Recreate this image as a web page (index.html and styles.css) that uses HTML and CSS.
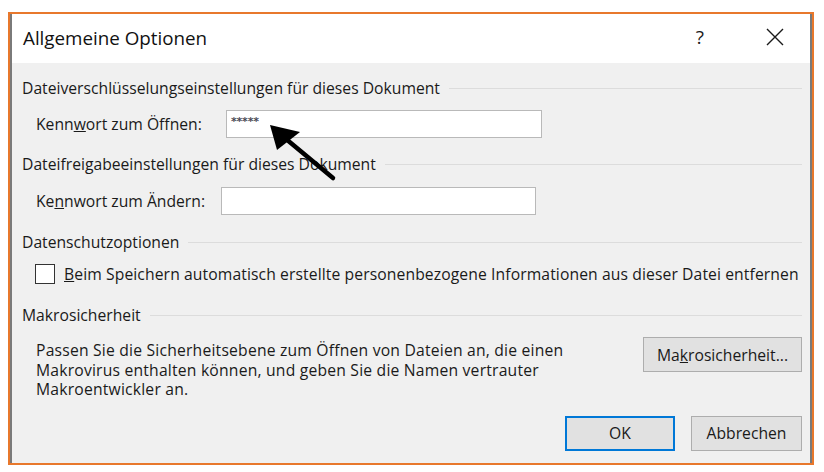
FILE: index.html
```html
<!DOCTYPE html>
<html lang="de">
<head>
  <meta charset="utf-8">
  <title>Allgemeine Optionen</title>
  <link rel="stylesheet" href="styles.css">
</head>
<body>
  <div class="frame">
    <div class="window">
      <div class="titlebar">
        <span class="title">Allgemeine Optionen</span>
        <span class="help">?</span>
        <svg class="close" width="18" height="18" viewBox="0 0 18 18">
          <path d="M1 1 L17 17 M17 1 L1 17" stroke="#1a1a1a" stroke-width="1.4" fill="none"/>
        </svg>
      </div>
      <div class="content">
        <div class="group-title">Dateiverschlüsselungseinstellungen für dieses Dokument</div>
        <div class="field first">
          <label class="label lbl-open">Kenn<u>w</u>ort zum Öffnen:</label>
          <div class="input input-open"><span class="stars">*****</span></div>
        </div>

        <div class="group-title g2">Dateifreigabeeinstellungen für dieses Dokument</div>
        <div class="field second">
          <label class="label lbl-change">Ke<u>n</u>nwort zum Ändern:</label>
          <div class="input input-change"></div>
        </div>

        <div class="group-title g3">Datenschutzoptionen</div>
        <div class="check-row">
          <span class="checkbox"></span>
          <span><u>B</u>eim Speichern automatisch erstellte personenbezogene Informationen aus dieser Datei entfernen</span>
        </div>

        <div class="group-title g4">Makrosicherheit</div>
        <div class="macro-row">
          <p class="macro-text">Passen Sie die Sicherheitsebene zum Öffnen von Dateien an, die einen Makrovirus enthalten können, und geben Sie die Namen vertrauter Makroentwickler an.</p>
          <button class="btn macro-btn">Ma<u>k</u>rosicherheit...</button>
        </div>

        <div class="footer">
          <button class="btn ok">OK</button>
          <button class="btn">Abbrechen</button>
        </div>
      </div>
    </div>
    <svg class="arrow" width="80" height="70" viewBox="0 0 80 70">
      <path d="M12 13 L65 57" stroke="#000" stroke-width="4.5" stroke-linecap="round"/>
      <path d="M2 4 L32 11 L9 29 Z" fill="#000"/>
    </svg>
  </div>
</body>
</html>
```

FILE: styles.css
```css
* {
  margin: 0;
  padding: 0;
  box-sizing: border-box;
}
body {
  width: 824px;
  height: 472px;
  background-color: #ffffff;
  font-family: 'Open Sans', 'Noto Sans', sans-serif;
  font-size: 15.7px;
  color: #1a1a1a;
  overflow: hidden;
}
.frame {
  position: relative;
  margin: 12px 0 0 8px;
  width: 806px;
  height: 453px;
  border: 2px solid #e8782c;
}
.window {
  height: 100%;
  border-left: 2px solid #7a7a7a;
  border-right: 2px solid #7a7a7a;
  display: flex;
  flex-direction: column;
}
.titlebar {
  height: 49px;
  background-color: #ffffff;
  display: flex;
  align-items: center;
  padding-left: 11px;
}
.title {
  font-size: 18.8px;
  color: #111;
  flex: 1;
  margin-top: -2px;
}
.help {
  font-size: 19px;
  margin-right: 62px;
  margin-top: -4px;
}
.close {
  margin-right: 26px;
  margin-top: -4px;
}
.content {
  flex: 1;
  background-color: #f0f0f0;
  padding: 15px 8px 0 10px;
}
.group-title {
  display: flex;
  align-items: center;
  height: 20px;
  white-space: nowrap;
}
.group-title::after {
  content: '';
  flex: 1;
  height: 1px;
  margin-left: 9px;
  background-color: #dcdcdc;
}
.g2 { margin-top: 16px; }
.g3 { margin-top: 17px; }
.g4 { margin-top: 21px; }
.field {
  display: flex;
  align-items: center;
  margin-top: 12px;
  padding-left: 14px;
}
.field.second { margin-top: 13px; }
.lbl-open { width: 190px; }
.lbl-change { width: 185px; }
.input {
  height: 28px;
  background-color: #ffffff;
  border: 1px solid #b9b9b9;
}
.input-open { width: 316px; padding: 5px 0 0 4px; line-height: 12px; }
.input-change { width: 315px; }
.stars {
  font-family: 'DejaVu Sans', sans-serif;
  font-size: 11px;
  font-weight: bold;
  color: #4a4a55;
  letter-spacing: -0.2px;
  vertical-align: top;
}
.check-row {
  display: flex;
  align-items: center;
  margin-top: 12px;
  padding-left: 13px;
  height: 20px;
  white-space: nowrap;
  letter-spacing: 0.1px;
}
.checkbox {
  width: 20px;
  height: 20px;
  background-color: #ffffff;
  border: 1px solid #333;
  margin-right: 9px;
  flex-shrink: 0;
}
.macro-row {
  display: flex;
  justify-content: space-between;
  align-items: flex-start;
  margin-top: 12px;
  padding-left: 14px;
}
.macro-text {
  width: 570px;
  line-height: 19.5px;
  padding-top: 4px;
  letter-spacing: 0.2px;
}
.btn {
  font-family: inherit;
  font-size: 15.7px;
  color: #1a1a1a;
  background-color: #e1e1e1;
  border: 1px solid #adadad;
  height: 35px;
  width: 111px;
}
.macro-btn {
  width: 159px;
}
.footer {
  display: flex;
  justify-content: flex-end;
  gap: 16px;
  margin-top: 16px;
}
.btn.ok {
  width: 110px;
  border: 2px solid #0078d7;
}
.arrow {
  position: absolute;
  left: 258px;
  top: 107px;
}
```
